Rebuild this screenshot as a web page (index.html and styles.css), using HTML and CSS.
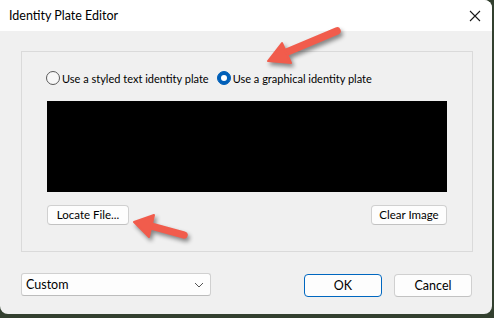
FILE: index.html
```html
<!DOCTYPE html>
<html lang="en">
<head>
    <meta charset="UTF-8">
    <title>Identity Plate Editor</title>
    <link rel="stylesheet" href="styles.css">
</head>
<body>

<div class="window">
    <div class="titlebar">
        <span class="title">Identity Plate Editor</span>
        <svg class="close" width="12" height="12" viewBox="0 0 12 12">
            <path d="M1 1 L11 11 M11 1 L1 11" stroke="#1a1a1a" stroke-width="1.1" fill="none"/>
        </svg>
    </div>

    <div class="content">
        <div class="group">
            <div class="radios">
                <label class="radio"><span class="dot"></span>Use a styled text identity plate</label>
                <label class="radio checked"><span class="dot"></span>Use a graphical identity plate</label>
            </div>
            <div class="plate"></div>
            <div class="actions">
                <button class="btn btn-locate">Locate File...</button>
                <button class="btn btn-clear">Clear Image</button>
            </div>
        </div>

        <div class="footer">
            <div class="select">
                <span>Custom</span>
                <svg width="10" height="6" viewBox="0 0 10 6">
                    <path d="M1 1 L5 5 L9 1" stroke="#555" stroke-width="1" fill="none"/>
                </svg>
            </div>
            <div class="buttons">
                <button class="btn btn-wide btn-default">OK</button>
                <button class="btn btn-wide">Cancel</button>
            </div>
        </div>
    </div>

    <!-- callout arrows drawn over the dialog -->
    <svg class="arrows" width="494" height="318" viewBox="0 0 494 318">
        <path d="M337 31 L287 52" stroke="#f15c4c" stroke-width="7.5" stroke-linecap="round" fill="none"/>
        <polygon points="268,61 282,43 291,63" fill="#f15c4c" stroke="#f15c4c" stroke-width="2" stroke-linejoin="round"/>
        <path d="M184 235 L151 226" stroke="#f15c4c" stroke-width="7.5" stroke-linecap="round" fill="none"/>
        <polygon points="134,222 154,215 149,237" fill="#f15c4c" stroke="#f15c4c" stroke-width="2" stroke-linejoin="round"/>
    </svg>
</div>

</body>
</html>
```

FILE: styles.css
```css
body {
    margin: 0;
    width: 494px;
    height: 318px;
    background-color: #33402f;
    font-family: 'Lato', sans-serif;
    font-size: 11px;
    color: #000;
    overflow: hidden;
}
.window {
    position: relative;
    width: 492px;
    height: 314px;
    background-color: #f0f0f0;
    border-radius: 0 8px 8px 8px;
    overflow: hidden;
    display: flex;
    flex-direction: column;
}
.titlebar {
    height: 31px;
    background-color: #fff;
    display: flex;
    align-items: center;
    justify-content: space-between;
    padding: 0 9px 0 9px;
    flex-shrink: 0;
}
.title {
    font-size: 12.5px;
    margin-top: -1px;
}
.close {
    margin-right: 2px;
}
.content {
    padding: 20px 20px 0 21px;
}
.group {
    border: 1px solid #dadada;
    padding: 0 24px 0 25px;
    box-sizing: border-box;
    width: 452px;
    height: 201px;
    display: flex;
    flex-direction: column;
}
.radios {
    display: flex;
    align-items: center;
    height: 16px;
    margin-top: 18px;
    margin-left: -1px;
    gap: 8px;
}
.radio {
    display: flex;
    align-items: center;
    gap: 2px;
    white-space: nowrap;
    font-size: 11px;
}
.dot {
    width: 12px;
    height: 12px;
    border: 1px solid #5a5a5a;
    border-radius: 50%;
    background-color: #f7f7f7;
    position: relative;
}
.checked .dot {
    background-color: #005fb8;
    border-color: #005fb8;
}
.checked .dot::after {
    content: '';
    position: absolute;
    left: 3px;
    top: 3px;
    width: 6px;
    height: 6px;
    border-radius: 50%;
    background-color: #fff;
}
.plate {
    width: 400px;
    height: 91px;
    margin-top: 15px;
    background-color: #000;
}
.actions {
    display: flex;
    justify-content: space-between;
    width: 400px;
    margin-top: 13px;
}
.btn {
    font-family: 'Lato', sans-serif;
    font-size: 11.5px;
    height: 20px;
    padding: 0;
    background-color: #fdfdfd;
    border: 1px solid #d0d0d0;
    border-bottom-color: #c2c2c2;
    border-radius: 4px;
    line-height: 16px;
    color: #000;
    white-space: nowrap;
}
.btn-locate {
    width: 82px;
}
.btn-clear {
    width: 76px;
}
.footer {
    display: flex;
    justify-content: space-between;
    align-items: flex-start;
    margin-top: 21px;
}
.select {
    width: 190px;
    height: 23px;
    box-sizing: border-box;
    background-color: #fdfdfd;
    border: 1px solid #d0d0d0;
    border-bottom-color: #bcbcbc;
    border-radius: 3px;
    display: flex;
    align-items: center;
    justify-content: space-between;
    padding: 0 6px 0 4px;
    font-size: 12.5px;
}
.buttons {
    display: flex;
    gap: 12px;
    margin-top: 1px;
}
.btn-wide {
    width: 78px;
    height: 23px;
    font-size: 12.5px;
}
.btn-default {
    border: 1px solid #0067c0;
}
.arrows {
    position: absolute;
    left: 0;
    top: 0;
    pointer-events: none;
    filter: drop-shadow(2px 3px 2px rgba(0, 0, 0, 0.45));
}
```
